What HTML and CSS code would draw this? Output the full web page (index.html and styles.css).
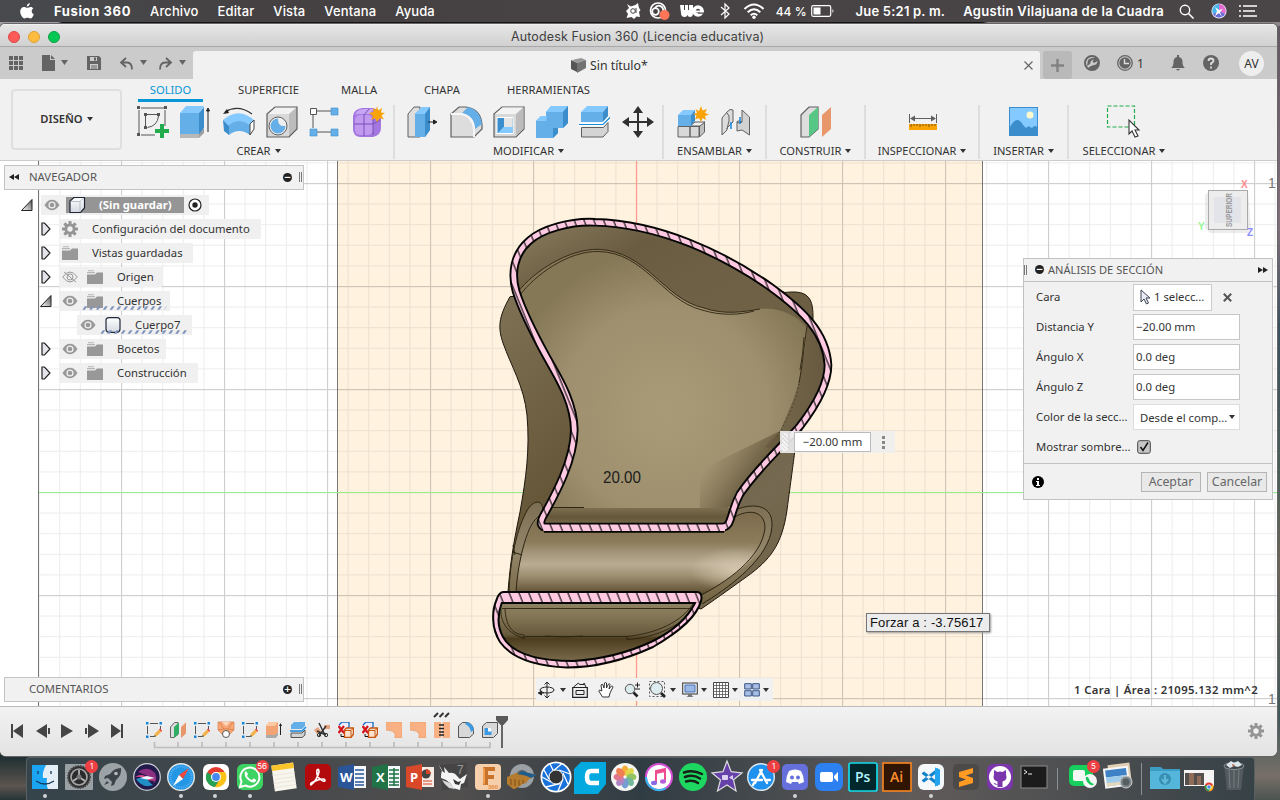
FILE: index.html
```html
<!DOCTYPE html>
<html lang="es">
<head>
<meta charset="utf-8">
<title>Autodesk Fusion 360</title>
<link rel="stylesheet" href="styles.css">
</head>
<body>
<svg class="defs" width="0" height="0" aria-hidden="true">
<defs>
<symbol id="eye" viewBox="0 0 16 12"><path d="M0.5 6C3 2 5.500 .8 8 .8S13 2 15.500 6C13 10 10.500 11.200 8 11.200S3 10 .5 6Z" fill="#989898"/><circle cx="8" cy="6" r="3.600" fill="#f0f0f0"/><circle cx="8" cy="6" r="2.300" fill="#989898"/></symbol>
<symbol id="folder" viewBox="0 0 16 14"><path d="M0 4.500h8l2-2h6V14H0z" fill="#989898"/><path d="M0 2h8v1.200H0zM1 .3h6v1H1z" fill="#b5b5b5"/></symbol>
<symbol id="closed" viewBox="0 0 10 14"><path d="M1 1h2.500L9 7 3.500 13H1z" fill="#e4e4ea" stroke="#222" stroke-width="1.200"/></symbol>
<symbol id="open" viewBox="0 0 12 12"><path d="M11 .5V11.500H.5z" fill="url(#gOpen)" stroke="#222"/></symbol>
<symbol id="gear" viewBox="0 0 16 16"><g fill="#959595"><path d="M6.500 0h3v16h-3z"/><path d="M6.500 0h3v16h-3z" transform="rotate(45 8 8)"/><path d="M6.500 0h3v16h-3z" transform="rotate(90 8 8)"/><path d="M6.500 0h3v16h-3z" transform="rotate(135 8 8)"/><circle cx="8" cy="8" r="5.600"/></g><circle cx="8" cy="8" r="2.700" fill="#f0f0f0"/></symbol>
<symbol id="sketch16" viewBox="0 0 16 16"><path d="M4 1.500h8M1.500 4v8M14.500 4v4M4 14.500h4" stroke="#555" fill="none"/><path d="M0 0h2.500v2.500H0zM13.500 0H16v2.500h-2.500zM0 13.500h2.500V16H0z" fill="#1487dd"/><path d="M8 15l1-3.500 4-4 2.300 2.300-4 4z" fill="#f5b34a"/><path d="M13 7.500l1-1 2.300 2.300-1 1z" fill="#e44"/><path d="M8 15l.7-2 1.400 1.300z" fill="#333"/></symbol>
<symbol id="pressorange" viewBox="0 0 16 16"><path d="M0 0h16v16h-7v-4q-1-2-3-3l-6-1z" fill="#f9b183" stroke="#e99b68" stroke-width=".7"/></symbol>
<symbol id="copyx" viewBox="0 0 16 16"><path d="M1 3l3-3h7v5L8 8" fill="#eef" stroke="#1466c4" stroke-width="1.300"/><path d="M6.500 8l2-2h7v6l-2.500 3.500H6.500z" fill="#fde3cf" stroke="#c8560e" stroke-width="1.400"/><path d="M7 8.500h6v6.500M13 8.500l2.500-2.500" stroke="#c8560e" fill="none"/><path d="M.5 4l5.500 7M6 4l-5.500 7" stroke="#d5141b" stroke-width="2.200"/><path d="M3 12v2.500h3" stroke="#111" fill="none"/></symbol>
<linearGradient id="gOpen" x1="0" y1="1" x2="1" y2="0"><stop offset="0" stop-color="#fff"/><stop offset="1" stop-color="#555"/></linearGradient>
<linearGradient id="gIco" x1="0" y1="0" x2="0" y2="1"><stop offset="0" stop-color="#fff"/><stop offset="1" stop-color="#d5d8e2"/></linearGradient>
</defs>
</svg>

<header class="menubar">
  <svg class="apple" viewBox="0 0 14 16" width="14" height="16"><path d="M9.800 0c.1 1.800-1.400 3.500-3 3.500C6.600 1.700 8.200.2 9.800 0zM13.300 5.500c-2.300 1.400-2 4.600.5 5.700-.7 2.100-2 4.300-3.400 4.300-1.200 0-1.500-.7-2.900-.7s-1.800.7-2.900.7C2.500 15.500.2 11.600.2 8.600.2 5.700 2 4 4 4c1.300 0 2.400.8 3.200.8S9.400 3.800 11 3.900c.9 0 1.800.7 2.300 1.600z" fill="#fff"/></svg>
  <nav class="menus"><b>Fusion 360</b><span>Archivo</span><span>Editar</span><span>Vista</span><span>Ventana</span><span>Ayuda</span></nav>
  <div class="tray">
    <svg viewBox="0 0 18 18" width="18" height="18"><path d="M3 2l3 2q4 1 8-3l1 5 1.500 2L15 10l1 5-3.500-.5L10 17l-2.500-2-5 1 1.500-4-2-3 3-3z" fill="#fff"/><circle cx="9" cy="9" r="2.300" fill="none" stroke="#444"/><path d="M12 6v5" stroke="#444"/></svg>
    <svg viewBox="0 0 21 18" width="21" height="18"><g fill="none" stroke="#fff" stroke-width="1.700"><circle cx="9" cy="8.500" r="7.500"/><circle cx="6.500" cy="9.500" r="3.300"/><path d="M6 6c3-5 9-1 8 3"/></g><circle cx="15.500" cy="13" r="5" fill="#ff7558"/></svg>
    <svg class="we" viewBox="0 0 24 14" width="24" height="14"><path d="M0 1h4v5h1V1h3v5h1V1h4v8q0 4-3 4-2 0-2.500-2Q7 13 4.500 13 1 13 1 9z" fill="#fff"/><circle cx="18" cy="7" r="4" fill="none" stroke="#fff" stroke-width="3.600"/><path d="M16 6.500h8v2h-8z" fill="#fff"/><path d="M18 8.500h6v1.200h-6z" fill="#4a4647"/></svg>
    <svg class="bt" viewBox="0 0 10 16" width="10" height="16"><path d="M1 4l8 7-4 4V1l4 4-8 7" fill="none" stroke="#fff" stroke-width="1.200"/></svg>
    <svg class="wifi" viewBox="0 0 22 16" width="22" height="16"><g fill="none" stroke="#fff" stroke-width="2"><path d="M1.500 6q9.500-9 19 0M4.700 9.300q6.300-6 12.600 0M7.700 12.200q3.300-3 6.600 0"/></g><circle cx="11" cy="14.200" r="1.700" fill="#fff"/></svg>
    <span class="pct">44 %</span>
    <svg viewBox="0 0 24 12" width="24" height="12"><rect x=".7" y=".7" width="19" height="10.600" rx="1.500" fill="none" stroke="#fff" stroke-width="1.200"/><path d="M2.500 2.500h7v7h-7zM21.500 4q2 2 0 4z" fill="#fff"/></svg>
    <span class="clock">Jue 5:21 p. m.</span>
    <span class="user">Agustin Vilajuana de la Cuadra</span>
    <svg class="search" viewBox="0 0 15 15" width="15" height="15"><circle cx="6" cy="6" r="4.700" fill="none" stroke="#fff" stroke-width="1.400"/><path d="M9.500 9.500l5 5" stroke="#fff" stroke-width="1.600"/></svg>
    <svg class="siri" viewBox="0 0 16 16" width="16" height="16"><circle cx="8" cy="8" r="7.600" fill="#e8e8fb"/><path d="M8 1a7 7 0 0 1 6 10L8 8z" fill="#e36bd0"/><path d="M8 1a7 7 0 0 0-6 10l6-3z" fill="#45b8e8"/><path d="M2 11a7 7 0 0 0 12 0L8 8z" fill="#6669d6"/><path d="M4 4l4 3 4-1-3 3 2 5-3-4-4 3 2-5z" fill="#fff"/></svg>
    <svg viewBox="0 0 18 12" width="18" height="12"><path d="M0 1h2M0 6h2M0 11h2M4 1h14M4 6h12M4 11h14" stroke="#fff" stroke-width="1.700"/></svg>
  </div>
</header>

<main class="window">
  <div class="titlebar"><i class="dot red"></i><i class="dot amber"></i><i class="dot green"></i><span class="wtitle">Autodesk Fusion 360 (Licencia educativa)</span></div>
  <div class="appbar">
    <div class="quick">
      <svg viewBox="0 0 14 14" width="14" height="14"><path d="M0 0h4v4H0zM5 0h4v4H5zM10 0h4v4h-4zM0 5h4v4H0zM5 5h4v4H5zM10 5h4v4h-4zM0 10h4v4H0zM5 10h4v4H5zM10 10h4v4h-4z" fill="#646464"/></svg>
      <svg class="q2" viewBox="0 0 26 16" width="26" height="16"><path d="M0 0h8v5h5v11H0zM9 0l4 4H9zM19 5h7l-3.500 5z" fill="#646464"/></svg>
      <svg class="q3" viewBox="0 0 14 14" width="14" height="14"><path d="M0 0h12l2 2v12H0z" fill="#646464"/><path d="M3 1h7v4H3zM3 8h8v5H3z" fill="#ccc"/><path d="M7 1.500h2v3H7zM4 9.500h6v1H4zM4 11.500h6v1H4z" fill="#646464"/></svg>
      <svg class="q4" viewBox="0 0 27 13" width="27" height="13"><path d="M6 1L1 5.500 6 10M2 5.500h5q5 0 5 7" fill="none" stroke="#646464" stroke-width="1.800"/><path d="M20 3h7l-3.500 5z" fill="#646464"/></svg>
      <svg class="q5" viewBox="0 0 27 13" width="27" height="13"><path d="M7 1l5 4.500L7 10M11 5.500H6q-5 0-5 7" fill="none" stroke="#646464" stroke-width="1.800"/><path d="M20 3h7l-3.500 5z" fill="#646464"/></svg>
    </div>
    <div class="doctab"><svg viewBox="0 0 16 16" width="16" height="16"><path d="M1 3l9-2 5 2-9 3z" fill="#999"/><path d="M0 3l6 3v9l-6-3z" fill="#555"/><path d="M6 6l9-3v8l-9 5z" fill="#737373"/></svg><span>Sin título*</span><svg class="x" viewBox="0 0 9 9" width="9" height="9"><path d="M.5.5l8 8M8.500.5l-8 8" stroke="#666" stroke-width="1.200"/></svg></div>
    <div class="plus"><svg viewBox="0 0 13 13" width="13" height="13"><path d="M6.500 0v13M0 6.500h13" stroke="#828282" stroke-width="2.400"/></svg></div>
    <div class="status">
      <svg viewBox="0 0 16 16" width="16" height="16"><circle cx="8" cy="8" r="7" fill="none" stroke="#646464" stroke-width="2"/><path d="M4 5q4-3 8-2l3 4-1 5-5 3-5-2 3-2 3-1q3 0 3.500-4L10 8 8.500 6.500 10 4 7 6 6 9l-3 2z" fill="#646464"/></svg>
      <svg viewBox="0 0 16 16" width="16" height="16"><circle cx="8" cy="8" r="7.300" fill="none" stroke="#646464" stroke-width="1.300"/><circle cx="8" cy="8" r="5.700" fill="#646464"/><path d="M7.500 4v4.500H12" stroke="#ddd" stroke-width="1.400" fill="none"/></svg>
      <span class="one">1</span>
      <svg class="bell" viewBox="0 0 14 16" width="14" height="16"><path d="M6 0h2v2q4 1 3.500 6 .5 4 2.500 5H0q2-1 2.500-5Q2 3 6 2zM5 14h4q-2 3-4 0z" fill="#646464"/></svg>
      <svg class="help" viewBox="0 0 16 16" width="16" height="16"><circle cx="8" cy="8" r="8" fill="#646464"/><path d="M5.500 6q0-2.500 2.500-2.500T10.500 6Q10 7.500 8 8.300V10M8 11.500v2" stroke="#ddd" stroke-width="1.800" fill="none"/></svg>
      <span class="av">AV</span>
    </div>
  </div>

  <section class="ribbon">
    <div class="design">DISEÑO<i class="car"></i></div>
    <div class="tools">
      <div class="tabs"><span class="on">SOLIDO</span><span class="t2">SUPERFICIE</span><span class="t3">MALLA</span><span class="t4">CHAPA</span><span class="t5">HERRAMIENTAS</span></div>
      <div class="groups">
        <div class="group g1"><div class="icons">
          <svg viewBox="0 0 32 32"><path d="M4 2h24M2 4v24M28 4v16M4 29h14" stroke="#555" fill="none"/><path d="M0 0h3v3H0zM27 0h3v3h-3zM0 27h3v3H0zM7 7h3v3H7zM20 7h3v3h-3zM7 20h3v3H7z" fill="#555"/><path d="M10 8.500h10M8.500 10v10M21.500 10q-1 10-11 11.500" fill="none" stroke="#555"/><path d="M23 18h4v5h5v4h-5v5h-4v-5h-5v-4h5z" fill="#23ac4e"/></svg>
          <svg viewBox="0 0 32 32"><path d="M0 28l6-5h18v4l-5 5H0z" fill="#a0a0a0"/><path d="M0 28h19v4H0z" fill="#b8b8b8"/><path d="M0 7l6-7h18l-5 7z" fill="#84c9ff"/><path d="M0 7h19v21H0z" fill="#65afe9"/><path d="M19 7l5-6v21l-5 6z" fill="#3b8dcb"/><path d="M28 26V4M26.500 5h3L28 2z" fill="#222" stroke="#222"/></svg>
          <svg viewBox="0 0 32 32"><path d="M2 6q13-8 27 2" fill="none" stroke="#333" stroke-width="1.200"/><path d="M0 8l4-5 2 4z" fill="#222"/><path d="M0 14q16-14 32 1l-5 4Q16 11 6 20z" fill="#84c9ff"/><path d="M6 19q10-8 21 0v10q-11-8-21 0z" fill="#65afe9"/><path d="M0 14l6 6v9l-5-4z" fill="#3b8dcb"/><path d="M27 18l4-4v9l-4 6z" fill="#fff" stroke="#444"/></svg>
          <svg viewBox="0 0 32 32"><path d="M1 8l8-7h22l-8 7z" fill="#f2f2f2"/><path d="M1 8h22v23H1z" fill="#d8d8d8"/><path d="M23 8l8-7v22l-8 8z" fill="#bcbcbc"/><path d="M1 8l8-7h22v22l-8 8H1z" fill="none" stroke="#606060" stroke-width="1.200"/><circle cx="12" cy="20" r="9" fill="#eee" stroke="#606060"/><path d="M12 12.500a7.500 7.500 0 1 0 7.500 7.500q-8 1-7.500-7.500z" fill="#65afe9"/></svg>
          <svg viewBox="0 0 32 32"><path d="M8 5h14M8 26h14M4 8v14" stroke="#555" fill="none"/><path d="M1.500 2.500h6v6h-6z" fill="#fff" stroke="#555"/><path d="M22 2h7v7h-7zM1 23h7v7H1zM22 23h7v7h-7z" fill="#65afe9" stroke="#3b8dcb" stroke-width=".6"/></svg>
          <svg viewBox="0 0 32 32"><path d="M1 10Q2 3 10 2h10q9 1 9 9v11q0 7-8 9H8Q1 30 1 23z" fill="#a377df"/><path d="M3 9q2-6 8-6h11l-4 5H6z" fill="#c6a5f3"/><rect x="3" y="9" width="18" height="20" rx="5" fill="#c19aef"/><path d="M12 9v21M2 18h19l7-4M12 9l5-6M21 10v19" stroke="#7b4eb8" fill="none"/><path d="M25 0l1.200 4.500L30 2l-1 4.500 4 .5-3.500 2.500 2.500 4-4-1.500L25 16l-2-4-4 2 2-4-4-3 4.500-1L21 2l3 2z" fill="#faa307"/></svg>
        </div><div class="lab">CREAR<i class="car"></i></div></div>
        <div class="group g2"><div class="icons">
          <svg viewBox="0 0 32 32"><path d="M1 8l6-7h6v30H1z" fill="#ddd" stroke="#606060"/><path d="M8 8l7-7h8v23l-5 7H8z" fill="#65afe9"/><path d="M8 8l7-7h8l-5 7z" fill="#84c9ff"/><path d="M18 8l5-7v23l-5 7z" fill="#3b8dcb"/><path d="M21 16h7M26.500 14l3.500 2-3.500 2z" stroke="#222" fill="#222"/></svg>
          <svg viewBox="0 0 32 32"><path d="M1 8l8-7h7q15 2 16 18v4l-8 8H1z" fill="#ddd" stroke="#606060" stroke-width="1.200"/><path d="M12 7l6-6q12 3 14 17l-7 5Q25 10 12 7z" fill="#65afe9"/><path d="M1 8h10q12 2 13 15v8" fill="none" stroke="#f7f7f7" stroke-width="2"/></svg>
          <svg viewBox="0 0 32 32"><path d="M1 8l8-7h22v22l-8 8H1z" fill="#d8d8d8" stroke="#606060" stroke-width="1.200"/><path d="M2 8l7.500-6.500H30L23 8z" fill="#f3f3f3"/><path d="M23 8l7.500-6.500v21L23 30z" fill="#bcbcbc"/><path d="M3.500 11h17v17h-17z" fill="#fff"/><path d="M4.500 12h15v15h-15z" fill="#3b8dcb"/><path d="M11 12h8.500v9H11z" fill="#e5e5e5"/><path d="M5 27l5.500-6h9v6z" fill="#84c9ff"/></svg>
          <svg viewBox="0 0 32 32"><path d="M10 6l5-6h17v17l-5 5h-5v5l-5 5H0V15l5-5h5z" fill="#65afe9"/><path d="M10 6l5-6h17l-5 6zM0 15l5-5h6l-1 5z" fill="#84c9ff"/><path d="M27 6l5-6v17l-5 5zM17 22h5v5l-5 5z" fill="#3b8dcb"/></svg>
          <svg viewBox="0 0 32 32"><path d="M2 6l6-6h21l-5 6z" fill="#84c9ff"/><path d="M2 6h22v10H2z" fill="#65afe9"/><path d="M24 6l5-6v10l-5 6z" fill="#3b8dcb"/><path d="M0 18.500h24l7-7" fill="none" stroke="#fff" stroke-width="3.500"/><path d="M0 18.500h24l7-7" fill="none" stroke="#1487dd" stroke-width="1.200"/><path d="M2.500 21.500h22l4.500-5v9L24 31H2.500z" fill="#d4d4d4" stroke="#606060"/></svg>
          <svg viewBox="0 0 32 32"><path d="M16 4v24M4 16h24" stroke="#303030" stroke-width="2"/><path d="M16 0l5 7H11zM16 32l5-7H11zM0 16l7-5v10zM32 16l-7-5v10z" fill="#303030"/></svg>
        </div><div class="lab">MODIFICAR<i class="car"></i></div></div>
        <div class="group g3"><div class="icons">
          <svg viewBox="0 0 32 32"><path d="M1 20.500h12V31H1zM13 20.500h9V31h-9z" fill="#d8d8d8" stroke="#606060"/><path d="M22.500 20l5-4v10l-5 5z" fill="#c0c0c0" stroke="#606060"/><path d="M13 20l5-4h10l-5 4z" fill="#eee" stroke="#606060"/><path d="M1 9l5-5h12l-4 5z" fill="#84c9ff"/><path d="M1 9h13v11H1z" fill="#65afe9"/><path d="M14 9l4-5v11l-4 5z" fill="#3b8dcb"/><path d="M24 0l1.500 4.500L30 3l-2 4 4 1.500-4 1.500 1 4-3.500-2L24 16l-2-4-4 1.500 1.500-4L16 8l4-1-1.500-4L22 5z" fill="#faa307"/></svg>
          <svg viewBox="0 0 32 32"><path d="M2 12l5-6q3-4 6-2v12l-6 6v2L2 29z" fill="#dcdcdc" stroke="#606060"/><path d="M7 7q3 2 2 8l-2 8" fill="none" stroke="#606060"/><path d="M29.500 11L22 4v12q-5-2-5 0v9l5-1 7.500 5z" fill="#d2d2d2" stroke="#606060"/><path d="M17 16q2 2 5 0" fill="none" stroke="#606060"/><path d="M11 16v7M20 11v7" stroke="#1487dd" stroke-width="1.500"/></svg>
        </div><div class="lab">ENSAMBLAR<i class="car"></i></div></div>
        <div class="group g4"><div class="icons"><svg viewBox="0 0 32 32"><path d="M1 9l8-8h9v22l-9 8H1z" fill="#ddd" stroke="#606060" stroke-width="1.200"/><path d="M9 9l9-8v22l-9 8z" fill="#57c785"/><path d="M22 9l9-8v22l-9 8z" fill="#e8976a"/></svg></div><div class="lab">CONSTRUIR<i class="car"></i></div></div>
        <div class="group g5"><div class="icons"><svg viewBox="0 0 32 32"><path d="M3.500 8v9M30.500 8v9M5 12.500h24" stroke="#606060"/><path d="M9 9.500l-5 3 5 3zM25 9.500l5 3-5 3z" fill="#606060"/><path d="M3 18h28v6H3z" fill="#faa307"/><path d="M5 18v3M8 18v2M11 18v2M14 18v3M17 18v2M20 18v2M23 18v3M26 18v2M29 18v2" stroke="#7d5200"/></svg></div><div class="lab">INSPECCIONAR<i class="car"></i></div></div>
        <div class="group g6"><div class="icons"><svg viewBox="0 0 32 32"><rect x="1.500" y="1.500" width="28" height="28" fill="#84c9ff" stroke="#3b8dcb"/><path d="M2 21q7-13 13-2l3 3q3-3 4-1l2 1q3-4 6 0v7H2z" fill="#3b8dcb"/><circle cx="22" cy="9" r="3.500" fill="#fff9cc"/></svg></div><div class="lab">INSERTAR<i class="car"></i></div></div>
        <div class="group g7"><div class="icons"><svg viewBox="0 0 32 32"><rect x="-.5" y="0" width="27" height="21" fill="none" stroke="#23ac4e" stroke-width="1.200" stroke-dasharray="4 2"/><path d="M21 14v14l3-3 3 6 3-1-3-6h4z" fill="#fff" stroke="#333" stroke-width="1.100"/></svg></div><div class="lab">SELECCIONAR<i class="car"></i></div></div>
      </div>
    </div>
  </section>

  <section class="canvas">
    <svg class="scene" viewBox="0 161 1277 545" width="1277" height="545">
      <defs>
        <pattern id="minorA" x="636" y="492" width="20.600" height="20.600" patternUnits="userSpaceOnUse"><path d="M0 .5H20.600M.5 0V20.600" stroke="#000" stroke-opacity=".075" fill="none"/></pattern>
        <pattern id="major" x="636" y="492" width="103" height="103" patternUnits="userSpaceOnUse"><path d="M0 .5H103M.5 0V103" stroke="#000" stroke-opacity=".12" stroke-width="1.300" fill="none"/></pattern>
        <pattern id="hatch" width="9.800" height="20" patternUnits="userSpaceOnUse" patternTransform="skewX(22)"><rect width="9.800" height="20" fill="#ffc9e1"/><path d="M5 0v20" stroke="#000" stroke-width="1.150"/></pattern>
        <linearGradient id="body" x1="0" y1="0" x2="1" y2="1"><stop offset="0" stop-color="#817458"/><stop offset=".4" stop-color="#665739"/><stop offset=".75" stop-color="#756a51"/><stop offset="1" stop-color="#6d6045"/></linearGradient>
        <radialGradient id="face" gradientUnits="userSpaceOnUse" cx="665" cy="410" r="160"><stop offset="0" stop-color="#a99b77"/><stop offset=".65" stop-color="#9e906e"/><stop offset="1" stop-color="#857856"/></radialGradient>
        <linearGradient id="shade" x1="0" y1="0" x2=".75" y2=".5"><stop offset="0" stop-color="#918465"/><stop offset=".55" stop-color="#695c41"/><stop offset="1" stop-color="#6e6146"/></linearGradient>
        <linearGradient id="side" x1="0" y1="0" x2="1" y2="0"><stop offset="0" stop-color="#776b4e"/><stop offset="1" stop-color="#61533a"/></linearGradient>
        <linearGradient id="seat" x1="0" y1="0" x2="0" y2="1"><stop offset="0" stop-color="#7c6c4d"/><stop offset=".35" stop-color="#8b7b5a"/><stop offset=".48" stop-color="#a4967a"/><stop offset=".62" stop-color="#b9ac94"/><stop offset=".75" stop-color="#9f9173"/><stop offset="1" stop-color="#554528"/></linearGradient>
        <linearGradient id="rim" x1="0" y1="0" x2="0" y2="1"><stop offset="0" stop-color="#7b6e52"/><stop offset=".5" stop-color="#93866a"/><stop offset="1" stop-color="#71623f"/></linearGradient>
        <linearGradient id="base" x1="0" y1="0" x2="0" y2="1"><stop offset="0" stop-color="#7c6f50"/><stop offset=".4" stop-color="#655739"/><stop offset="1" stop-color="#827455"/></linearGradient>
        <radialGradient id="glow" gradientUnits="userSpaceOnUse" cx="735" cy="570" r="45" gradientTransform="translate(0 285) scale(1 .5)"><stop offset="0" stop-color="#dccfb7"/><stop offset="1" stop-color="#dccfb7" stop-opacity="0"/></radialGradient>
        <linearGradient id="corner" gradientUnits="userSpaceOnUse" x1="715" y1="455" x2="760" y2="485"><stop offset="0" stop-color="#6d6043" stop-opacity="0"/><stop offset="1" stop-color="#5f5237"/></linearGradient>
        <linearGradient id="low" gradientUnits="userSpaceOnUse" x1="0" y1="603" x2="0" y2="662"><stop offset="0" stop-color="#8f8262"/><stop offset=".2" stop-color="#857858"/><stop offset=".54" stop-color="#675a3c"/><stop offset=".6" stop-color="#4b3d1e"/><stop offset="1" stop-color="#7a6c4d"/></linearGradient>
        <clipPath id="ringClip"><path d="M595 222.300C571 221 542 229 529 241C514 254 511 273 516 291C521 307 534 334 546.500 356.700C558 377 574 402 574.300 430C574 460 556 493 545 513C538 524 541 527.700 548 527.700H721C733 527 729 514 740 494C759 466 785 444 800 426C817 404 828 384 828 365C826 332 802 310 770 286.700C723 254 660 224 595 222.300Z"/></clipPath>
      </defs>
      <rect x="0" y="161" width="1277" height="545" fill="#fff"/>
      <rect x="337" y="161" width="646" height="545" fill="#fff2df"/>
      <rect x="39" y="161" width="1238" height="545" fill="url(#minorA)"/>
      <rect x="39" y="161" width="1238" height="545" fill="url(#major)"/>
      <path d="M38.500 161V706M337.500 161V706M982.500 161V706" stroke="#777"/>
      <path d="M39 492.500H1277" stroke="#93f08c" stroke-width="1.200"/>
      <path d="M636.500 161V706" stroke="#ff9b8e" stroke-width="1.200"/>
      <g font-family="Liberation Sans, sans-serif" font-size="14" fill="#777"><text x="1268" y="188">1</text><text x="1268" y="704">1</text></g>

      <path d="M510 296.700C498 318 498 328 503 343C511 366 524 386 527 415C530 450 526 478 520 512C514 540 510 564 508 592H650L701 609C720 596 735 585 746.700 576.700C770 560 782 545 787 510C791 480 793 465 795 450L812 400L813 316C813 296 806 290 785 292.500L740 275Z" fill="url(#body)" stroke="#1c160b" stroke-width="1"/>
      <path d="M509 592C510 560 517 527 528 509C535 499 543 500 543 511L548 530H725L731 512C747 503 778 500 771 533C764 563 725 590 702 604L650 593z" fill="url(#rim)"/>
      <path d="M516 592C518 560 528 528 540 516L545 531H724L733 520C748 508 765 511 765 528C762 558 725 583 701 596L650 593Z" fill="url(#seat)"/>
      <path d="M660 540H765C758 560 725 583 701 594H660Z" fill="url(#glow)" opacity=".8"/>
      <path d="M509 592C510 560 517 527 528 509C535 499 543 500 543 511M516 592C518 560 528 520 540 516M733 518C749 508 765 511 765 528C762 558 725 583 701 595M731 512C747 503 778 500 771 533C764 563 725 590 702 604M513 552l9 3M513 545l2 10" fill="none" stroke="#2d2412"/>

      <g clip-path="url(#ringClip)">
        <rect x="505" y="215" width="330" height="320" fill="url(#face)"/>
        <path d="M518 292C533 272 568 249 598 249.300C647 251 663 299 704 308C724 315 743 312 760 309C780 307 796 315 807 328L845 330L780 210H500z" fill="url(#shade)"/>
        <path d="M807 326C806 346 804 357 801 370C798 392 789 410 780 431L765 447L800 455L845 370z" fill="url(#side)"/>
        <path d="M780 431L700 470V508H727L780 480z" fill="url(#corner)"/>
        <path d="M540 508H738V530H535z" fill="url(#base)"/>
        <path d="M518 292C533 272 568 249 598 249.300C647 251 663 299 704 308C724 315 743 312 760 309M520 295C535 275 568 251 598 251.500C645 252 662 300 702 310C721 316 740 315 754 311M807 326C804 346 803 362 799 383M804 337Q803 355 800 370" fill="none" stroke="#2d2412" stroke-width=".9"/>
        <path d="M799 384C796 402 787 420 777 437" fill="none" stroke="#2d2412" stroke-width=".8" stroke-dasharray="1 3"/>
        <path d="M550 507.500H584" stroke="#30250f"/>
      </g>
      <g fill="none">
        <path d="M595 222.300C571 221 542 229 529 241C514 254 511 273 516 291C521 307 534 334 546.500 356.700C558 377 574 402 574.300 430C574 460 556 493 545 513C538 524 541 527.700 548 527.700H721C733 527 729 514 740 494C759 466 785 444 800 426C817 404 828 384 828 365C826 332 802 310 770 286.700C723 254 660 224 595 222.300Z" stroke="#050505" stroke-width="8.600"/>
        <path d="M544 527.700H724" stroke="#050505" stroke-width="10"/>
        <path d="M595 222.300C571 221 542 229 529 241C514 254 511 273 516 291C521 307 534 334 546.500 356.700C558 377 574 402 574.300 430C574 460 556 493 545 513C538 524 541 527.700 548 527.700H721C733 527 729 514 740 494C759 466 785 444 800 426C817 404 828 384 828 365C826 332 802 310 770 286.700C723 254 660 224 595 222.300Z" stroke="url(#hatch)" stroke-width="4.800"/>
        <path d="M543 527.700H725" stroke="url(#hatch)" stroke-width="6.400"/>
      </g>

      <path d="M498 600H698C697 616 682 630 653 645C620 660 593 665 567 665C532 664 510 654 502 642C493 628 494 610 498 600z" fill="url(#low)"/>
      <path d="M502 608.500H691M524 636.500H628M501 609C500 622 508 634 524 638M505 609C506 626 512 634 524 635M693 604C678 626 650 634 627 636.500M695 607C680 629 650 638 627 639.500V636M524 635v4M545 636q20 2 38 0" fill="none" stroke="#2d2412" stroke-width=".9"/>
      <path fill-rule="evenodd" d="M503.500 592H697C701.500 592 702 597 701 601C697 616 682 630 653 647C620 662 593 667.500 567 667.500C532 666 510 656 500 642C491 628 492 610 496.500 600C498 595 500 592 503.500 592ZM501.700 603C498 613 497 626 503 637C513 655 541 661 573 661C605 659 632 651 653 641C675 630 688 617 695 603Z" fill="url(#hatch)" stroke="#050505" stroke-width="2"/>
      <text x="603" y="483" textLength="38" lengthAdjust="spacingAndGlyphs" font-family="Liberation Sans, sans-serif" font-size="15.800" fill="#1d1d1d">20.00</text>
    </svg>

    <aside class="navigator">
      <div class="phead"><svg viewBox="0 0 10 6" width="10" height="6"><path d="M5 0v6L0 3zM10 0v6L5 3z" fill="#222"/></svg><span>NAVEGADOR</span><i class="round">−</i><i class="grip"></i></div>
      <ul class="tree">
        <li class="lv0"><svg class="ar" width="12" height="12"><use href="#open"/></svg><div class="row r1"><svg width="16" height="12"><use href="#eye"/></svg><span class="sel"><svg viewBox="0 0 16 16" width="16" height="16"><path d="M1 4l4-3.500h10.500V11l-4 4.500H1z" fill="url(#gIco)" stroke="#1e2433" stroke-width="1.200"/><path d="M1.500 4.500h9.500v10.500M11 4.500l4-3.500" fill="none" stroke="#b9c0c8"/></svg><b>(Sin guardar)</b></span><svg class="radio" viewBox="0 0 14 14" width="14" height="14"><circle cx="7" cy="7" r="6" fill="#fff" stroke="#222" stroke-width="1.200"/><circle cx="7" cy="7" r="2.700" fill="#222"/></svg></div></li>
        <li><svg class="ar" width="10" height="14"><use href="#closed"/></svg><div class="row r2"><svg width="16" height="16"><use href="#gear"/></svg><span>Configuración del documento</span></div></li>
        <li><svg class="ar" width="10" height="14"><use href="#closed"/></svg><div class="row r3"><svg width="16" height="14"><use href="#folder"/></svg><span>Vistas guardadas</span></div></li>
        <li><svg class="ar" width="10" height="14"><use href="#closed"/></svg><div class="row r4"><svg viewBox="0 0 16 12" width="16" height="12"><path d="M.7 6Q8-4 15.300 6 8 16 .7 6zM2 1l12 10" fill="none" stroke="#989898"/><circle cx="8" cy="6" r="3" fill="none" stroke="#989898"/></svg><svg class="f" width="16" height="14"><use href="#folder"/></svg><span>Origen</span></div></li>
        <li><svg class="ar" width="12" height="12"><use href="#open"/></svg><div class="row r5"><svg width="16" height="12"><use href="#eye"/></svg><svg class="f" width="16" height="14"><use href="#folder"/></svg><span>Cuerpos</span><svg class="sq" viewBox="0 0 82 4" width="82" height="4"><path d="M0 2H82" stroke="#7f93bb" stroke-width="3.500" stroke-dasharray="2.500 4.300" transform="skewX(-35) translate(2 0)"/></svg></div></li>
        <li class="lv2"><div class="row r6"><svg width="16" height="12"><use href="#eye"/></svg><svg class="f" viewBox="0 0 16 16" width="16" height="16"><path d="M1 3q0-2 3-2.300h8q3 .3 3 2.300v9q0 3-3 3.300H4Q1 15 1 12z" fill="url(#gIco)" stroke="#20283a" stroke-width="1.200"/></svg><span>Cuerpo7</span><svg class="sq" viewBox="0 0 88 4" width="88" height="4"><path d="M0 2H88" stroke="#7f93bb" stroke-width="3.500" stroke-dasharray="2.500 4.300" transform="skewX(-35) translate(2 0)"/></svg></div></li>
        <li><svg class="ar" width="10" height="14"><use href="#closed"/></svg><div class="row r7"><svg width="16" height="12"><use href="#eye"/></svg><svg class="f" width="16" height="14"><use href="#folder"/></svg><span>Bocetos</span></div></li>
        <li><svg class="ar" width="10" height="14"><use href="#closed"/></svg><div class="row r8"><svg width="16" height="12"><use href="#eye"/></svg><svg class="f" width="16" height="14"><use href="#folder"/></svg><span>Construcción</span></div></li>
      </ul>
    </aside>
    <div class="phead comments"><span>COMENTARIOS</span><i class="round">+</i><i class="grip"></i></div>

    <svg class="viewcube" viewBox="1194 174 66 66" width="66" height="66"><path d="M1209 191l-4 4v33l5 5h38l3-5-3-37z" fill="#000" opacity=".07"/><rect x="1208.500" y="190.500" width="39" height="39" fill="#ededed" stroke="#aaa"/><rect x="1214" y="197" width="27" height="26" fill="#e3e4ea"/><text x="0" y="0" transform="translate(1232 227) rotate(-90)" textLength="34" lengthAdjust="spacingAndGlyphs" font-family="Liberation Sans, sans-serif" font-weight="bold" font-size="9" fill="#999">SUPERIOR</text><g font-family="Liberation Sans, sans-serif" font-size="10" font-weight="bold"><text x="1241" y="188" fill="#ff8c8c">X</text><text x="1198" y="230" fill="#96f796">Y</text><text x="1247" y="236" fill="#8c8cff">Z</text></g></svg>

    <div class="dimbox"><i></i><span>−20.00 mm</span><svg viewBox="0 0 3 13" width="3" height="13"><path d="M0 0h3v3H0zM0 5h3v3H0zM0 10h3v3H0z" fill="#888"/></svg></div>
    <div class="tip">Forzar a : -3.75617</div>

    <aside class="section">
      <div class="shead"><i class="grip"></i><i class="round">−</i><span>ANÁLISIS DE SECCIÓN</span><svg viewBox="0 0 10 6" width="10" height="6"><path d="M0 0v6l5-3zM5 0v6l5-3z" fill="#222"/></svg></div>
      <div class="sbody">
        <div class="f"><label>Cara</label><div class="pick"><svg viewBox="0 0 10 16" width="10" height="16"><path d="M1 1v12l3-3 2.500 5 2-1L6 9h4z" fill="#e9ecf5" stroke="#3c4254"/></svg><span>1 selecc...</span></div><svg class="clear" viewBox="0 0 9 9" width="9" height="9"><path d="M.8.8l7.400 7.400M8.200.8L.8 8.200" stroke="#555" stroke-width="2"/></svg></div>
        <div class="f"><label>Distancia Y</label><div class="inp">−20.00 mm</div></div>
        <div class="f"><label>Ángulo X</label><div class="inp">0.0 deg</div></div>
        <div class="f"><label>Ángulo Z</label><div class="inp">0.0 deg</div></div>
        <div class="f"><label>Color de la secc...</label><div class="inp dd"><span>Desde el comp...</span><i class="car"></i></div></div>
        <div class="f"><label>Mostrar sombre...</label><svg class="chk" viewBox="0 0 14 14" width="14" height="14"><rect x=".7" y=".7" width="12.600" height="12.600" rx="2" fill="#c5c5c5" stroke="#444"/><path d="M3.500 7l2.500 3.500 5-8" fill="none" stroke="#111" stroke-width="1.500"/></svg></div>
      </div>
      <div class="sfoot"><svg viewBox="0 0 12 12" width="12" height="12"><circle cx="6" cy="6" r="6" fill="#000"/><path d="M5 2h2v2H5zM4 5h3v4h1v1H4V9h1V6H4z" fill="#fff"/></svg><span class="btn b1">Aceptar</span><span class="btn b2">Cancelar</span></div>
    </aside>

    <div class="area">1 Cara | Área : 21095.132 mm^2</div>

    <div class="viewbar">
      <svg viewBox="0 0 18 18" width="18" height="18"><path d="M9 1v16M6.500 3.500L9 1l2.500 2.500M6.500 14.500L9 17l2.500-2.500" stroke="#222" fill="none"/><ellipse cx="9" cy="9" rx="7" ry="3" fill="none" stroke="#222"/><path d="M0 12h6M3.500 10L.5 12l3 2z" fill="#222" stroke="#222"/></svg><i class="car"></i>
      <svg class="v2" viewBox="0 0 16 16" width="16" height="16"><path d="M.7 5.500h14.600v9.800H.7z" fill="#eee" stroke="#222" stroke-width="1.200"/><path d="M4 8.500h8v4H4z" fill="none" stroke="#222"/><path d="M1.500 5l5-4 1 1.500H12V1l2 4" fill="none" stroke="#222"/></svg>
      <svg class="v3" viewBox="0 0 16 16" width="16" height="16"><path d="M4.500 15L.8 9q0-2 3 0L3 3q1-1.500 2 0l1 3 .5-5q1-1 2 0v5L10.500 2q1-.8 1.500.5L11 7l2.500-3q1.500 0 1.500 1l-3 6-1 4z" fill="#fff" stroke="#222" stroke-width=".9"/></svg>
      <svg class="v4" viewBox="0 0 16 16" width="16" height="16"><circle cx="6" cy="7" r="4.700" fill="#dcebed" stroke="#555"/><path d="M9.500 10.500l4 4" stroke="#222" stroke-width="2.600"/><path d="M11 3h5M13.500.5v5M11 7h5" stroke="#222"/></svg>
      <svg class="v5" viewBox="0 0 17 17" width="17" height="17"><rect x=".5" y=".5" width="15" height="15" fill="none" stroke="#555" stroke-dasharray="2 2"/><circle cx="7.500" cy="7.500" r="6" fill="#dcebed" stroke="#555"/><path d="M12 12l4 4" stroke="#222" stroke-width="2.600"/></svg><i class="car"></i>
      <svg class="v6" viewBox="0 0 16 16" width="16" height="16"><rect x=".7" y="1" width="14.600" height="11" fill="#eee" stroke="#333"/><path d="M3 3h10v7H3z" fill="#9bb9e6" stroke="#4571b8"/><path d="M6 12h4v2l2 1H4l2-1z" fill="#777"/></svg><i class="car"></i>
      <svg class="v7" viewBox="0 0 16 16" width="16" height="16"><path d="M.5.5h15v15H.5z" fill="#fff" stroke="#444"/><path d="M3.500 0v16M6.500 0v16M9.500 0v16M12.500 0v16M0 3.500h16M0 6.500h16M0 9.500h16M0 12.500h16" stroke="#555" stroke-width=".8"/></svg><i class="car"></i>
      <svg class="v8" viewBox="0 0 16 14" width="16" height="14"><g fill="#a7bfe6" stroke="#3d5684"><path d="M.7.7h6.600v5.300H.7zM8.700.7h6.600v5.300H8.700zM.7 7.700h6.600V13H.7zM8.700 7.700h6.600V13H8.700z"/></g></svg><i class="car"></i>
    </div>
  </section>

  <footer class="timeline">
    <svg class="play" viewBox="0 0 116 16" width="116" height="16"><path d="M0 1h2v14H0zM12 1v14L2 8zM36 1v14L25 8zM37 5h2v6h-2zM50 1l12 7-12 7zM74 5h2v6h-2zM77 1v14l11-7zM100 1v14l10-7zM110 1h2v14h-2z" fill="#454545"/></svg>
    <div class="feats">
      <div class="frow">
        <svg viewBox="0 0 16 16"><use href="#sketch16"/></svg>
        <svg viewBox="0 0 16 16"><path d="M.5 5l4-4.500H8v12l-4 3H.5z" fill="#ddd" stroke="#666"/><path d="M4 5l5-4.500v11L4 16z" fill="#2fae62"/><path d="M11 5l5-4.500v11L11 16z" fill="#e8976a"/></svg>
        <svg viewBox="0 0 16 16"><use href="#sketch16"/></svg>
        <svg viewBox="0 0 16 16"><path d="M0 0h16v8l-5 5H5L0 8z" fill="#f9a877" stroke="#d98350" stroke-width=".7"/><path d="M1 0l5 7h4l5-7M0 8l6-1M16 8l-6-1" fill="none" stroke="#d98350"/><path d="M4 0h8l-4 4z" fill="#ffd9bd"/><circle cx="8" cy="12" r="3.500" fill="#fff" stroke="#555"/></svg>
        <svg viewBox="0 0 16 16"><use href="#sketch16"/></svg>
        <svg viewBox="0 0 16 16"><path d="M0 13l3-2h9v2l-2 3H0z" fill="#aaa"/><path d="M0 4l3-4h9v10l-3 3H0z" fill="#f2a273"/><path d="M0 4l3-4h9L9 4z" fill="#fcc9a5"/><path d="M14.500 3v10" stroke="#222"/><path d="M13 4l1.500-3L16 4z" fill="#222"/></svg>
        <svg viewBox="0 0 16 16"><path d="M1 3l3-3h11v4l-3 3H1z" fill="#65afe9"/><path d="M0 9h12l4-4" fill="none" stroke="#1487dd" stroke-width="1.300"/><path d="M1 11h11l3-3v5l-3 2.500H1z" fill="#d2d2d2" stroke="#555"/></svg>
        <svg viewBox="0 0 16 16"><path d="M10 3h6v4h-6zM0 8l4-3 3 4-4 3z" fill="#e6a27c"/><path d="M5 1l6 12M12 4L5 14M3 9l9 4" stroke="#333" stroke-width="1.500"/><circle cx="5" cy="13" r="1.700" fill="none" stroke="#333"/><circle cx="12" cy="13" r="1.700" fill="none" stroke="#333"/></svg>
        <svg viewBox="0 0 16 16"><use href="#copyx"/></svg>
        <svg viewBox="0 0 16 16"><use href="#copyx"/></svg>
        <svg viewBox="0 0 16 16"><use href="#pressorange"/></svg>
        <svg viewBox="0 0 16 16"><use href="#pressorange"/></svg>
        <svg class="tall" viewBox="0 -9 16 25"><path d="M0 0h7v16H0zM8.500 0H16v16H8.500z" fill="#f9b183"/><path d="M5 3h5M5 6.500h5M5 10h5M5 13h5" stroke="#222" stroke-width="1.300"/><path d="M0-5l4-4M5.500-5l4-4M11-5l4-4" stroke="#333" stroke-width="2"/></svg>
        <svg viewBox="0 0 16 16"><path d="M.5 4l4-3.500H9q6 1 6.500 8V12l-4 3.500H.5z" fill="#d8d8d8" stroke="#555"/><path d="M7 2l2-2q6 2 7 8l-3 2Q12 4 7 2z" fill="#3d9ae2"/></svg>
        <svg viewBox="0 0 16 16"><path d="M.5 4l4-3.500h11v11l-4 4H.5z" fill="#d8d8d8" stroke="#555"/><path d="M2.500 6h7v7h-7z" fill="#3d9ae2"/><path d="M6 6h3.500v3.500H6z" fill="#fff"/></svg>
      </div>
      <svg class="ticks" viewBox="142 740 372 8" width="372" height="8"><path d="M154.500 741v5.500H490V741M178 741v5M202 741v5M226 741v5M250 741v5M274 741v5M298 741v5M322 741v5M346 741v5M370 741v5M394 741v5M418 741v5M442 741v5M466 741v5" fill="none" stroke="#bdbdbd" stroke-width="1.700"/></svg>
      <svg class="marker" viewBox="0 0 12 32" width="12" height="32"><path d="M0 0h12v4L7.500 9h-3L0 4z" fill="#595959"/><path d="M6 8v24" stroke="#595959" stroke-width="1.800"/></svg>
    </div>
    <svg class="tgear" width="16" height="16"><use href="#gear"/></svg>
  </footer>
</main>

<nav class="dock">
  <div class="app run"><svg viewBox="0 0 28 28"><path d="M1 2h26v24H1z" fill="#e4eef6"/><path d="M1 2h14q-4 7-3 13h4q-1 7 1 11H1z" fill="#1ba4f2"/><path d="M7 8v3M20 8v3M5 18q9 6 18 0" fill="none" stroke="#12395b" stroke-width="1.300"/></svg></div>
  <div class="app"><svg viewBox="0 0 28 28"><rect y="1" width="28" height="26" rx="1" fill="#99a1a5"/><circle cx="14" cy="14" r="11" fill="#2b2b2d" stroke="#4a4a4a" stroke-width="2" stroke-dasharray="1.500 1"/><circle cx="14" cy="14" r="8" fill="none" stroke="#a4a4a4" stroke-width="1.700"/><path d="M14 14V7M14 14l-6 4M14 14l6 4" stroke="#bbb" stroke-width="1.700"/><circle cx="14" cy="14" r="2.500" fill="#777"/></svg><b class="bd">1</b></div>
  <div class="app"><svg viewBox="0 0 28 28"><circle cx="14" cy="14" r="14" fill="#9ba3a7"/><path d="M22 5q-7 0-11 6l-5 2-1 3 4-1 4 4-1 4 3-1 2-5q6-5 5-12zM8 18l-3 4 5-2z" fill="#3d4449"/><circle cx="17" cy="10.500" r="1.800" fill="#b5bbbe"/></svg></div>
  <div class="app"><svg viewBox="0 0 28 28"><circle cx="14" cy="14" r="13.300" fill="#221a4a" stroke="#c8ccd3" stroke-width="1.300"/><path d="M5 9q9-7 17 1 3 6-1 10-1-6-16-11z" fill="#8d2f80"/><path d="M2 14q6-4 12 0t11 2q-8 3-12 0T2 14z" fill="#e14a8c"/><path d="M3 16q6-3 11 0 3 4 6 6-10 4-17-6z" fill="#1f8fc4"/><path d="M7 15l7-2 8 2-8 1.500z" fill="#f1f7ff"/></svg></div>
  <div class="app run"><svg viewBox="0 0 28 28"><circle cx="14" cy="14" r="13.300" fill="#2496e6" stroke="#e2e5e6" stroke-width="1.400"/><circle cx="14" cy="14" r="10.500" fill="none" stroke="#8dcaff" stroke-dasharray=".5 1.500" stroke-width="2"/><path d="M22 5l-6 11-4-4z" fill="#f0473c"/><path d="M6 23l6-11 4 4z" fill="#fff"/></svg></div>
  <div class="app run"><svg viewBox="0 0 28 28"><rect x="1" y="1" width="26" height="26" rx="6" fill="#fff"/><circle cx="14" cy="14" r="10" fill="#e53a30"/><path d="M5 9.500A10 10 0 0 0 13 24l5-8-4-2z" fill="#25a353"/><path d="M14 9h9a10 10 0 0 1-10 15l5-8z" fill="#fbc316"/><circle cx="14" cy="14" r="5" fill="#fff"/><circle cx="14" cy="14" r="3.900" fill="#4689ee"/></svg></div>
  <div class="app run"><svg viewBox="0 0 28 28"><rect x="1" y="1" width="26" height="26" rx="6" fill="#3ed262"/><path d="M4 24l1.500-5.500a9.500 9.500 0 1 1 4 4z" fill="none" stroke="#fff" stroke-width="2"/><path d="M9 9q1-2 3 2l-1 2q2 3 5 4l1.500-1.500q4 1 2 3-3 2.500-8-2-4-4-2.500-7.500z" fill="#fff"/></svg><b class="bd">56</b></div>
  <div class="app"><svg viewBox="0 0 28 28"><g transform="rotate(-8 14 14)"><rect x="3" y="1" width="22" height="26" fill="#f8f5ec"/><rect x="3" y="1" width="22" height="5.500" fill="#f9c52b"/><path d="M3 11h22M3 15h22M3 19h22M3 23h22" stroke="#eae7df"/></g></svg></div>
  <div class="app"><svg viewBox="0 0 28 28"><rect x="1" y="1" width="26" height="26" rx="5" fill="#b30b0d"/><path d="M7 22q-2-2 7-5 6-2 7 0 0 3-5-1-4-3-3-9 2-2 2 2-2 8-8 13z" fill="none" stroke="#fff" stroke-width="1.600"/></svg></div>
  <div class="app office"><svg viewBox="0 0 28 28"><path d="M15 3h13v22H15z" fill="#f4f7fa"/><path d="M17 7h9M17 11h9M17 15h9M17 19h9M17 22h9" stroke="#2a5599" stroke-width="1.500"/><path d="M0 4l16-3v26L0 24z" fill="#2a5599"/><text x="2" y="19">W</text></svg></div>
  <div class="app office"><svg viewBox="0 0 28 28"><path d="M15 3h13v22H15z" fill="#f4f7fa"/><path d="M17 7h10M17 11h10M17 15h10M17 19h10M17 22h10M22 5v18" stroke="#1f7346" stroke-width="1.500"/><path d="M0 4l16-3v26L0 24z" fill="#1f7346"/><text x="4" y="19">X</text></svg></div>
  <div class="app office"><svg viewBox="0 0 28 28"><path d="M15 4h13v20H15z" fill="#f7ebe6"/><circle cx="20" cy="11" r="4.500" fill="#444"/><path d="M20 11h5a5 5 0 0 0-5-5z" fill="#d34626"/><path d="M17 18h9M17 21h9" stroke="#d34626"/><path d="M0 4l16-3v26L0 24z" fill="#d94829"/><text x="4" y="19">P</text></svg></div>
  <div class="app"><svg viewBox="0 0 28 28"><path d="M0 2l26-2 2 24-26 3z" fill="#454545"/><path d="M-1 2q2 6 6 8l-1-6 5 6q5-1 8 3l3 3 7-5-3 9-3 1-1 6-7-2-2-4-5-4-5-2q0-5 1-8z" fill="#f4f4f4"/><path d="M2 17l8 3 5 6-6-1q-5-4-7-8z" fill="#dadada"/><path d="M13 16l5 3 3-1-2 4-4-1z" fill="#333"/><text x="17" y="11" font-family="Liberation Sans" font-size="12" fill="#999">7</text></svg></div>
  <div class="app run"><svg viewBox="0 0 28 28"><rect x="1" y="1" width="26" height="26" rx="4" fill="#f5cfab"/><path d="M9 4h12v4h-7v4h6v4h-6v6H9z" fill="#c9722c"/><path d="M9 4l2 2v16l-2-2z" fill="#f19c4f"/><text x="14" y="26" font-family="Liberation Sans" font-size="6" font-weight="bold" fill="#e78c3e">360</text></svg></div>
  <div class="app"><svg viewBox="0 0 28 28"><circle cx="14" cy="13" r="12" fill="#9aa0a3"/><circle cx="14" cy="13" r="6" fill="#5a6367"/><path d="M-1 14l9-4q8-2 20 2l-8 5q-2 5-5 3-2 4-4 3-5 5-7 2l-5-4z" fill="#b57b2e"/><path d="M9 11q5-4 8-2l12 3-6 3q-5-3-14-4z" fill="#205d8c"/><path d="M3 16v6M7 16v7M11 17v6M15 17v4" stroke="#815019"/></svg></div>
  <div class="app"><svg viewBox="0 0 28 28"><circle cx="14" cy="14" r="15.500" fill="#fff"/><circle cx="14" cy="14" r="13.800" fill="#1872da"/><path d="M8 1l4 8M20 .5L10 9M28 11L17 7M26 21L21 10M16 28l5-12M4 24l14-3.500M0 14l9 5M2 7l5 9" stroke="#fff" stroke-width="1.300"/><circle cx="14" cy="14" r="7" fill="#333" stroke="#fff"/></svg></div>
  <div class="app"><svg viewBox="0 0 28 28"><path d="M4-1h25v22l-8 10H-3V6z" fill="#04a9df"/><path d="M22 8h-8q-4 0-4 6t4 6h8" fill="none" stroke="#fff" stroke-width="4.500"/></svg></div>
  <div class="app"><svg viewBox="0 0 28 28"><circle cx="14" cy="14" r="14" fill="#f6f6f3"/><g opacity=".85"><ellipse cx="14" cy="7.500" rx="3.500" ry="5" fill="#f7a21b"/><ellipse cx="14" cy="7.500" rx="3.500" ry="5" fill="#d9d330" transform="rotate(45 14 14)"/><ellipse cx="14" cy="7.500" rx="3.500" ry="5" fill="#83bc47" transform="rotate(90 14 14)"/><ellipse cx="14" cy="7.500" rx="3.500" ry="5" fill="#5bae8b" transform="rotate(135 14 14)"/><ellipse cx="14" cy="7.500" rx="3.500" ry="5" fill="#5e8fcb" transform="rotate(180 14 14)"/><ellipse cx="14" cy="7.500" rx="3.500" ry="5" fill="#a273bd" transform="rotate(225 14 14)"/><ellipse cx="14" cy="7.500" rx="3.500" ry="5" fill="#df607d" transform="rotate(270 14 14)"/><ellipse cx="14" cy="7.500" rx="3.500" ry="5" fill="#ee6b39" transform="rotate(315 14 14)"/></g></svg></div>
  <div class="app"><svg viewBox="0 0 28 28"><circle cx="14" cy="14" r="13" fill="#fff" stroke="#d64fd7" stroke-width="2"/><path d="M1 14a13 13 0 0 0 20 11" fill="none" stroke="#31b9ee" stroke-width="2"/><path d="M11 20V8l9-2v12M11 10l9-2" fill="none" stroke="#ed4d90" stroke-width="2"/><ellipse cx="9" cy="20" rx="3" ry="2.200" fill="#896be8"/><ellipse cx="18" cy="18.500" rx="3" ry="2.200" fill="#b75fd9"/></svg></div>
  <div class="app"><svg viewBox="0 0 28 28"><circle cx="14" cy="14" r="14" fill="#1ed760"/><path d="M5 9.500q9-3 18 1.500M6 14q8-3 15 1.500M7 18.500q7-2 12 1.500" fill="none" stroke="#172019" stroke-width="2.500" stroke-linecap="round"/></svg></div>
  <div class="app"><svg viewBox="0 0 28 28"><path d="M14-2l4.200 10.700L29 10l-8.500 6.700L23 28l-9-6-9.500 6 3-11L-1 10l11-1.300z" fill="#6641aa" stroke="#ddd" stroke-width="1.200"/><rect x="9" y="12" width="6" height="5" rx="1" fill="#dcd1f3"/><path d="M16 14.500l4-2.500v5z" fill="#dcd1f3"/></svg></div>
  <div class="app"><svg viewBox="0 0 28 28"><circle cx="14" cy="14" r="13.300" fill="#1e91ee" stroke="#dbe7ef" stroke-width="1.400"/><path d="M8 20l7-13M13 7l7 13M5 17h10M18 17h5M6 22l1-2" stroke="#fff" stroke-width="2.300" stroke-linecap="round"/></svg><b class="bd">1</b></div>
  <div class="app run"><svg viewBox="0 0 28 28"><rect x="1" y="1" width="26" height="26" rx="5" fill="#6570dd"/><path d="M8 8q6-3 12 0 3 5 3 11l-5 2-1-2h-6l-1 2-5-2Q5 13 8 8z" fill="#fff"/><circle cx="11" cy="14.500" r="2" fill="#6570dd"/><circle cx="17" cy="14.500" r="2" fill="#6570dd"/></svg></div>
  <div class="app"><svg viewBox="0 0 28 28"><rect width="28" height="28" rx="7" fill="#2d80ef"/><rect x="5" y="9" width="13" height="10" rx="2" fill="#fff"/><path d="M19 13l4-4v10l-4-4z" fill="#fff"/></svg></div>
  <div class="app adobe"><svg viewBox="0 0 28 28"><rect y="0" width="28" height="28" rx="2" fill="#00272c" stroke="#14dbea" stroke-width="1.700"/><text x="6" y="19" fill="#b5f4ff">Ps</text></svg></div>
  <div class="app adobe"><svg viewBox="0 0 28 28"><rect y="0" width="28" height="28" fill="#301404" stroke="#ef8222" stroke-width="1.700"/><text x="7" y="19" fill="#ff902c">Ai</text></svg></div>
  <div class="app run"><svg viewBox="0 0 28 28"><rect x="1" y="1" width="26" height="26" rx="6" fill="#f5f8fa"/><path d="M5 10l2-1.500L21 19v4L5 11zM5 18l2 1.500L21 9V5L5 17z" fill="#1283cc"/><path d="M18 4.500l5 2v15l-5 2z" fill="#23a4ef"/></svg></div>
  <div class="app"><svg viewBox="0 0 28 28"><rect x="1" y="1" width="26" height="26" rx="5" fill="#4b4a49"/><path d="M7 9l14-4v5l-7 2.500 7 2.500v5L7 24v-5l7-2.500L7 14z" fill="#ff9a22"/></svg></div>
  <div class="app"><svg viewBox="0 0 28 28"><rect x="1" y="1" width="26" height="26" rx="6" fill="#7a36aa"/><circle cx="14" cy="14" r="11" fill="#fff"/><path d="M8 7l3.500 2q2.500-1 5 0L20 7v4.500q2 5.500-3.500 7V24h-5v-5.500Q6 17 8 11.500zM11.500 21.500q-3 1-4-2" fill="#7a36aa"/></svg></div>
  <div class="app"><svg viewBox="0 0 28 28"><rect x="1" y="3" width="26" height="22" fill="#1c1c1c" stroke="#8b8b8b"/><path d="M4 7l3 2-3 2M8 11h4" fill="none" stroke="#eee"/></svg></div>
  <i class="sep s1"></i>
  <div class="app"><svg viewBox="0 0 28 28"><rect x="-1" y="2" width="24" height="21" rx="5" fill="#17cf5d"/><rect x="3" y="7" width="12" height="11" rx="2" fill="#f4f8f4"/><circle cx="20" cy="18" r="7" fill="#f5f5f5"/><path d="M16 14q2-1 3 2 1 4 5 5-2 3-6-1-3-4-2-6z" fill="#19c85a"/></svg><b class="bd low">5</b></div>
  <div class="app"><svg viewBox="0 0 28 28"><g transform="rotate(-7 14 14)"><rect x="5" y="1" width="22" height="22" fill="#e0cfb4"/><rect x="0" y="4" width="25" height="20" fill="#f7f7f7"/><rect x="2" y="6" width="21" height="7" fill="#3e82c5"/><path d="M2 13h21v9H2z" fill="#9ecbea"/><path d="M2 18q10 3 21-2v6H2z" fill="#e6d7bd"/></g><circle cx="22" cy="19" r="6" fill="#7f8a8e" stroke="#ccc"/><circle cx="22" cy="19" r="3.500" fill="#575e62"/></svg></div>
  <i class="sep s2"></i>
  <div class="app"><svg viewBox="0 0 28 28"><path d="M0 4h10l2 2h17v20H-1V4z" fill="#3c9cc4"/><path d="M-1 8h30v18H-1z" fill="#55b6dc"/><circle cx="14" cy="16" r="6" fill="#388eb3"/><path d="M14 12v7M11 16l3 4 3-4" fill="none" stroke="#5fb9db" stroke-width="2"/></svg></div>
  <div class="app"><svg viewBox="0 0 28 28"><rect x="-1" y="7" width="30" height="16" fill="#f4f4f4"/><rect x="0" y="10" width="19" height="12" fill="#55504d"/><path d="M4 10h5v12H4zM12 13h4v9h-4z" fill="#8e6c57"/><circle cx="24" cy="24" r="4.500" fill="#e53a30"/><path d="M20 22a5 5 0 0 0 4 6.500l2-4z" fill="#25a353"/><path d="M28 21.500a5 5 0 0 1-4 7l2-5z" fill="#fbc316"/><circle cx="24" cy="24" r="2.100" fill="#4689ee" stroke="#fff" stroke-width=".8"/></svg></div>
  <div class="app"><svg viewBox="0 0 28 28"><path d="M5 2h20l-3 25H8z" fill="#535b5e"/><path d="M10 7l1 18M15 7v18M20 7l-1 18" stroke="#777f82"/><ellipse cx="15" cy="3" rx="10" ry="3.500" fill="#3e4547" stroke="#8b9498"/><path d="M7 2l5-4 3 2 4-2 4 4-4 2-4-1-4 2z" fill="#dde6e9"/><path d="M13 1l3 1-2 2z" fill="#bc5a48"/></svg></div>
</nav>
</body>
</html>
```
FILE: styles.css
```css
* { box-sizing: border-box; }
body {
  margin: 0; width: 1280px; height: 800px; overflow: hidden; display: flex; flex-direction: column;
  background:
    linear-gradient(90deg, #a09ca2 58px, #151313 62px 983px, #8c8489 988px) 0 22px / 1280px 4px no-repeat,
    linear-gradient(#625764, #82707b 200px, #3c5160 300px, #4b5f58 450px, #6c6459 540px, #40585a 690px, #776f67 750px, #4b5350) right 26px / 28px 774px no-repeat,
    linear-gradient(#1d2e31, #5c544f 30px, #263437 44px) 0 756px / 30px 44px no-repeat,
    #20292c;
  font-family: "Noto Sans", sans-serif; color: #333;
}
.defs { display: block; position: absolute; }
svg { display: block; flex: none; overflow: visible; }
i { font-style: normal; }
ul { list-style: none; margin: 0; padding: 0; }

.menubar { height: 22px; flex: none; display: flex; align-items: center; justify-content: space-between; padding: 0 23px 0 20px; background: linear-gradient(90deg, #484a4e, #454142 20%, #4a4647); color: #fff; font: 500 13px Inter, sans-serif; }
.menus { display: flex; gap: 19px; margin-left: 20px; margin-right: auto; white-space: nowrap; letter-spacing: .12px; }
.menus b { letter-spacing: .62px; }
.tray { display: flex; align-items: center; white-space: nowrap; gap: 7px; }
.we { margin-left: 3px; }
.bt { margin-left: 9px; }
.wifi { margin-left: 6px; }
.pct { margin: 0 -3px 0 4px; font-size: 12px; }
.clock { margin-left: 14px; font-weight: 600; letter-spacing: .2px; }
.user { margin-left: 11px; font-weight: 600; letter-spacing: .3px; }
.search { margin-left: 8px; }
.siri { margin: 0 5px 0 10px; }

.window { margin-top: 2px; width: 1277px; height: 732px; flex: none; display: flex; flex-direction: column; border-radius: 5px 5px 6px 6px; overflow: hidden; background: #f1f1f1; box-shadow: 0 0 0 1px #666; }
.titlebar { height: 23px; flex: none; display: flex; align-items: center; gap: 8px; padding: 2px 0 0 8px; background: linear-gradient(#e5e5e5, #d1d1d1); border-bottom: 1px solid #a9a9a9; border-top: 1px solid #f0f0f0; }
.dot { width: 12px; height: 12px; border-radius: 50%; background: #fc5b57; border: 1px solid #df4744; }
.dot.amber { background: #fdbc40; border-color: #df9f33; }
.dot.green { background: #05c854; border-color: #0ba244; }
.wtitle { flex: 1; padding-left: 443px; font: 12.500px Inter, sans-serif; letter-spacing: .13px; color: #404040; white-space: nowrap; }
.appbar { height: 32px; flex: none; display: flex; align-items: flex-end; background: #cbcbcb; }
.quick { width: 193px; height: 32px; display: flex; align-items: center; padding-left: 9px; }
.q2 { margin-left: 19px; } .q3 { margin-left: 19px; } .q4 { margin-left: 19px; } .q5 { margin-left: 12px; }
.doctab { width: 847px; height: 28px; display: flex; align-items: center; padding-left: 378px; gap: 3px; background: #f1f1f1; border-radius: 3px 3px 0 0; font-size: 12.300px; }
.doctab .x { margin-left: auto; margin-right: 7px; }
.plus { width: 29px; height: 28px; margin-left: 3px; display: flex; align-items: center; justify-content: center; background: #b9b9b9; border-radius: 3px; }
.status { height: 32px; margin-left: 12px; display: flex; align-items: center; }
.status svg + svg { margin-left: 17px; }
.one { margin: 0 28px 0 4px; font-size: 12px; width: 7px; }
.status .bell { margin-left: -1px; }
.status .help { margin-left: 18px; }
.av { width: 25px; height: 25px; margin-left: 20px; border-radius: 50%; display: flex; align-items: center; justify-content: center; background: #eee; font-size: 12px; }

.ribbon { height: 82px; flex: none; display: flex; background: #f1f1f1; border-bottom: 1px solid #ccc; }
.design { width: 111px; height: 61px; margin: 10px 2px 0 11px; flex: none; border: 2px solid #dfdfdf; border-radius: 4px; display: flex; align-items: center; justify-content: center; font-size: 11.200px; font-weight: 600; padding-bottom: 2px; }
.car { display: inline-block; width: 0; height: 0; border: 3px solid transparent; border-top: 4px solid #333; border-bottom: 0; margin-left: 4px; flex: none; vertical-align: 2px; }
.tools { display: flex; flex-direction: column; }
.tabs { height: 24px; display: flex; padding-left: 14px; font-size: 11.200px; line-height: 21px; white-space: nowrap; }
.tabs span { flex: none; }
.tabs .on { width: 65px; height: 23px; text-align: center; color: #0696d7; border-bottom: 3px solid #0696d7; }
.tabs .t2 { width: 103px; margin-left: 35px; }
.tabs .t3 { width: 83px; } .tabs .t4 { width: 83px; } .tabs .t5 { width: 90px; }
.groups { display: flex; }
.group { height: 54px; margin-top: 2px; flex: none; border-right: 2px solid #dedede; display: flex; flex-direction: column; align-items: center; }
.icons { display: flex; gap: 11px; height: 34px; padding-top: 1px; }
.g1 .icons, .g2 .icons { padding-left: 3px; }
.icons svg { width: 32px; height: 32px; }
.lab { margin-top: 3px; font-size: 11.100px; line-height: 20px; white-space: nowrap; }
.g5 .lab { font-size: 10.900px; }
.g1 { width: 271px; } .g2 { width: 269px; } .g3 { width: 103px; } .g4 { width: 99px; } .g5 { width: 114px; } .g6 { width: 89px; } .g7 { width: 110px; border: 0; }

.canvas { position: relative; height: 545px; flex: none; font-size: 11.300px; }
.scene { position: absolute; left: 0; top: 0; }
.navigator { position: absolute; left: 4px; top: 4px; width: 300px; }
.phead { height: 25px; display: flex; align-items: center; padding: 0 0 1px 4px; border: 1px solid #c4c4c4; background: #f1f1f1; color: #555; font-size: 11.300px; }
.phead span { margin: -1px auto 0 10px; }
.round { width: 9px; height: 9px; border-radius: 50%; background: #222; color: #fff; font: bold 9px/9px "DejaVu Sans", sans-serif; text-align: center; flex: none; }
.grip { width: 3px; height: 10px; border: 1px solid #777; border-width: 0 1px; margin: 0 1px 0 6px; }
.phead .round { margin-right: 1px; }
.comments { position: absolute; left: 4px; top: 516px; width: 300px; padding-left: 14px; }
.tree { margin-top: 3px; }
.tree li { height: 24px; display: flex; align-items: center; padding-left: 37px; }
.tree .lv0 { padding-left: 17px; }
.tree .lv2 { padding-left: 73px; }
.ar { margin-right: 8px; }
li:nth-child(5) .ar { margin: 0 7px 0 -1px; }
.row { position: relative; height: 20px; display: flex; align-items: center; padding-left: 3px; background: #f0f0f0; white-space: nowrap; }
.row > span:not(.sel) { margin: -1px 0 0 14px; }
.row .f { margin-left: 9px; }
.sel { width: 118px; height: 16px; margin-left: 6px; padding-left: 3px; display: flex; align-items: center; gap: 14px; background: #959595; color: #fff; }
.sel b { margin-top: -1px; }
.radio { margin-left: 4px; }
.r1 { width: 168px; } .r2 { width: 202px; } .r3 { width: 134px; } .r4 { width: 103px; } .r5 { width: 111px; } .r6 { width: 115px; } .r7 { width: 107px; } .r8 { width: 139px; }
.sq { position: absolute; left: 24px; bottom: 1px; }

.viewcube { position: absolute; left: 1194px; top: 13px; }
.dimbox { position: absolute; left: 780px; top: 270px; width: 115px; height: 22px; display: flex; align-items: center; background: rgba(238,238,238,.9); }
.dimbox i { width: 8px; height: 18px; margin: 0 4px 0 2px; border-right: 2px solid #ddd; background: repeating-linear-gradient(45deg, #ddd 0 1px, #f3f3f3 1px 3px); }
.dimbox span { width: 77px; height: 20px; line-height: 18px; text-align: center; border: 1px solid #bbb; background: #fff; margin-right: 11px; }
.tip { position: absolute; left: 866px; top: 452px; width: 124px; height: 19px; border: 1px solid #777; background: #ececec; box-shadow: 1px 1px 2px #999; font: 13px/17px "Liberation Sans", sans-serif; letter-spacing: .15px; color: #111; padding-left: 3px; white-space: nowrap; }
.section { position: absolute; left: 1023px; top: 97px; width: 250px; height: 242px; background: #f1f1f1; border: 1px solid #c2c2c2; }
.shead { height: 23px; display: flex; align-items: center; padding-bottom: 1px; border-bottom: 1px solid #c2c2c2; color: #555; font-size: 11.100px; }
.shead .grip { margin: 0 8px 0 0; }
.shead span { margin: -1px auto 0 4px; }
.shead > svg { margin-right: 4px; }
.sbody { height: 182px; border-bottom: 1px solid #c2c2c2; }
.f { display: flex; align-items: center; }
.sbody .f { height: 30px; padding-left: 12px; white-space: nowrap; }
label { width: 97px; margin-top: -1px; flex: none; overflow: hidden; }
.inp { width: 107px; height: 26px; line-height: 23px; padding-left: 2px; border: 1px solid #c6c6c6; background: #fff; }
.pick { width: 79px; height: 27px; display: flex; align-items: center; gap: 4px; padding: 0 0 1px 6px; border: 1px solid #ccc; background: #fff; }
.clear { margin-left: 11px; }
.dd { display: flex; align-items: center; padding-left: 6px; border-color: #ddd; }
.dd .car { margin-left: auto; margin-right: 4px; }
.chk { margin-left: 4px; }
.sfoot { height: 35px; display: flex; align-items: center; padding-left: 8px; }
.btn { width: 60px; height: 20px; border: 1px solid #b5b5b5; background: #e8e8e8; color: #666; font-size: 12.300px; line-height: 17px; text-align: center; }
.b1 { margin-left: 97px; } .b2 { margin-left: 6px; }
.area { position: absolute; right: 19px; bottom: 9px; font-weight: 600; white-space: nowrap; letter-spacing: .35px; }
.viewbar { position: absolute; left: 536px; top: 517px; width: 237px; height: 23px; display: flex; align-items: center; padding-left: 2px; background: rgba(240,240,242,.95); }
.v2 { margin-left: 6px; } .v3 { margin-left: 10px; } .v4 { margin-left: 10px; } .v5 { margin-left: 9px; } .v6, .v7, .v8 { margin-left: 6px; }
.viewbar .car { margin-left: 4px; }
.viewbar .v6 + .car, .viewbar .v7 + .car, .viewbar .v8 + .car { margin-left: 3px; }

.timeline { height: 50px; flex: none; display: flex; background: linear-gradient(#f2f2f2, #e3e3e3); border-top: 1px solid #bbb; }
.play { margin: 16px 15px 0 11px; }
.feats { position: relative; width: 372px; display: flex; flex-direction: column; }
.frow { display: flex; gap: 8px; height: 34px; padding: 15px 0 0 4px; }
.frow svg { width: 16px; height: 16px; }
.frow .tall { height: 25px; margin-top: -9px; }
.marker { position: absolute; left: 354px; top: 9px; }
.tgear { margin: 16px 0 0 734px; }

.dock { width: 1229px; height: 43px; margin: 1px 0 0 26px; flex: none; display: flex; padding: 5px 0 0 1px; border-radius: 4px 4px 0 0; border: 1px solid #596064; border-bottom: 0; background: linear-gradient(90deg, #35434a, #514e4e 35%, #303c43 50%, #615b5a 72%, #374247); }
.app { position: relative; width: 34.100px; height: 36px; flex: none; display: flex; justify-content: center; }
.app svg { width: 28px; height: 28px; }
.run::after { content: ""; position: absolute; left: 15px; top: 31px; width: 4px; height: 4px; border-radius: 50%; background: #cfd3d5; }
.bd { position: absolute; right: -2px; top: -3px; width: 13px; height: 13px; border-radius: 50%; background: #ee3f42; color: #fff; font: 8px/13px Inter, sans-serif; text-align: center; }
.bd.low { right: 1px; }
.sep { width: 1px; height: 22px; flex: none; background: #899197; margin: 5px 9px 0 6px; }
.s2 { height: 32px; margin: 0 6px; }
.office text { font: bold 13px "Open Sans", sans-serif; fill: #fff; }
.adobe text { font: 600 14px "Open Sans", sans-serif; }
```
